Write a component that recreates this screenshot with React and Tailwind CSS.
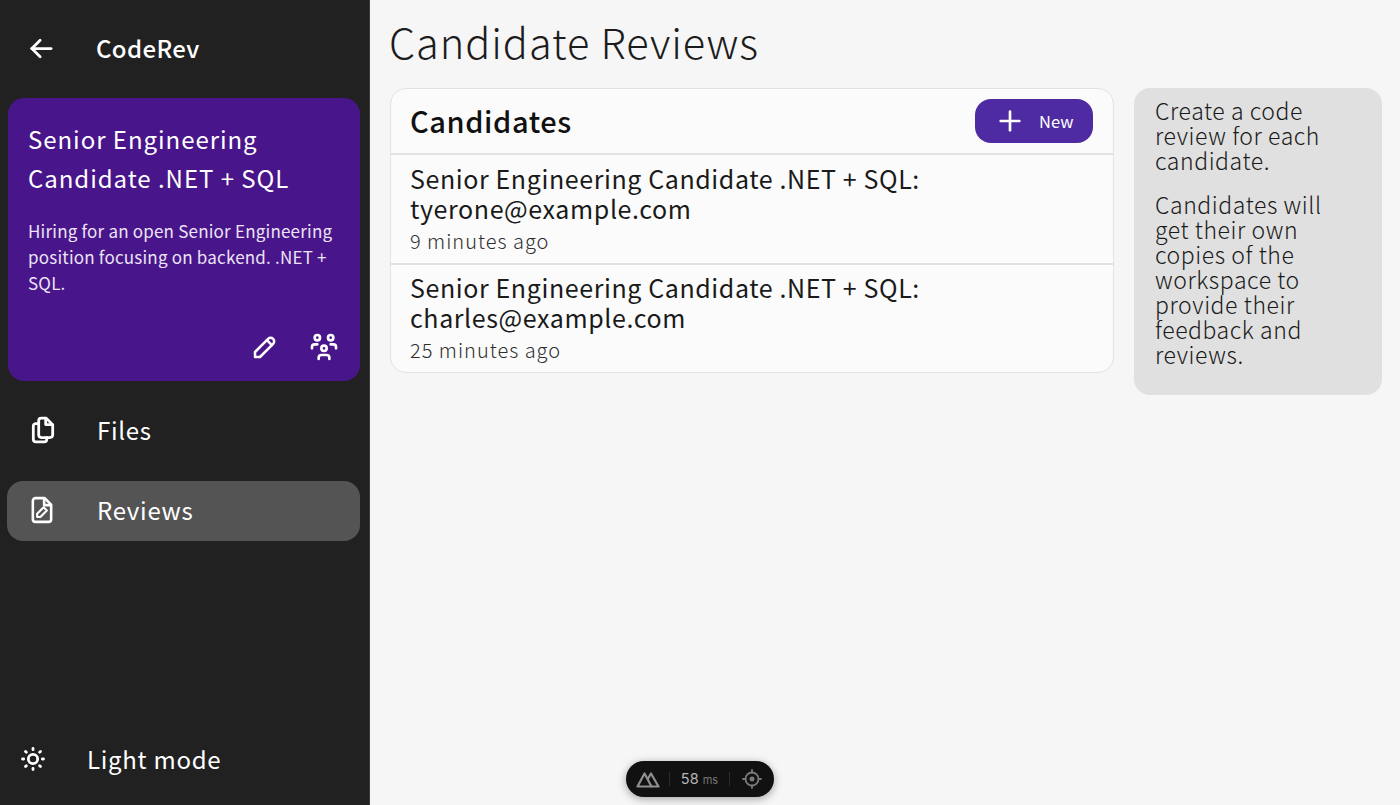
import { TbArrowLeft, TbPencil, TbUsersGroup, TbSun, TbPlus } from 'react-icons/tb';

const FilesIcon = () => (
  <svg width="28" height="28" viewBox="0 0 26 26" fill="none" stroke="currentColor" strokeWidth="2.6" strokeLinejoin="round" strokeLinecap="round">
    <path d="M9 4.500a2.500 2.500 0 0 1 2.500-2.500h4.500l6 6v9.500a2.500 2.500 0 0 1-2.500 2.500h-8a2.500 2.500 0 0 1-2.500-2.500z" />
    <path d="M15.500 2.500v5.500h6" />
    <path d="M9 7H6.500A2.500 2.500 0 0 0 4 9.500v12A2.500 2.500 0 0 0 6.500 24h7.500a2.500 2.500 0 0 0 2.500-2.500V20" />
  </svg>
);

const ReviewIcon = () => (
  <svg width="28" height="28" viewBox="0 0 26 26" fill="none" stroke="currentColor" strokeWidth="2.400" strokeLinejoin="round" strokeLinecap="round" className="-ml-[1px]">
    <path d="M4.500 4.500A2.500 2.500 0 0 1 7 2h8.500l6 6v13.500a2.500 2.500 0 0 1-2.500 2.500H7a2.500 2.500 0 0 1-2.500-2.500z" />
    <path d="M15 2.500V8.500h6" />
    <path d="M8.500 19.500v-3l6-6 3 3-6 6z" strokeWidth="2" />
  </svg>
);

const NuxtLogo = () => (
  <svg width="24" height="17" viewBox="0 0 24 17" fill="none" stroke="#8f8f8f" strokeWidth="2.200" strokeLinejoin="round">
    <path d="M1.500 15.500 8.500 2.500l7 13z" />
    <path d="M11.500 8.500 15 2.500l7.500 13h-7" />
  </svg>
);

const TargetIcon = () => (
  <svg width="20" height="20" viewBox="0 0 20 20" fill="none" stroke="#7a7a7a" strokeWidth="1.800" strokeLinecap="round">
    <circle cx="10" cy="10" r="6.500" />
    <circle cx="10" cy="10" r="1.600" fill="#7a7a7a" />
    <path d="M10 1v2.500M10 16.500V19M1 10h2.500M16.500 10H19" />
  </svg>
);

const candidates = [
  { email: 'tyerone@example.com', time: '9 minutes ago' },
  { email: 'charles@example.com', time: '25 minutes ago' },
];

const NavItem = ({ icon, label, active }) => (
  <div className={`h-[60px] mx-[7px] w-[353px] rounded-[16px] flex items-center text-white pb-[2px] ${active ? 'bg-[#545454]' : ''}`}>
    <span className="w-[90px] pl-[22px] flex items-center">{icon}</span>
    <span className="text-[24px] tracking-[0.03em] font-normal">{label}</span>
  </div>
);

export default function App() {
  return (
    <div className="h-[805px] w-[1400px] flex overflow-hidden bg-[#f6f6f6] font-['Noto_Sans_CJK_JP','Noto_Sans',sans-serif]">
      <aside className="w-[370px] shrink-0 h-full bg-[#212121] border-r border-[#3a3a3a] flex flex-col text-white">
        <div className="h-[98px] flex items-center pl-[25px] pb-[2px]">
          <TbArrowLeft size={33} className="mr-[38px]" />
          <span className="text-[24px] font-medium tracking-[0.015em]">CodeRev</span>
        </div>
        <section className="mx-2 w-[352px] h-[283px] rounded-[16px] bg-[#49158a] px-5 pt-[21px] flex flex-col">
          <h2 className="text-[24px] leading-[39px] font-normal tracking-[0.04em]">Senior Engineering Candidate .NET + SQL</h2>
          <p className="mt-[21px] text-[17px] leading-[26px] text-[#ece4f6] tracking-[0.012em]">Hiring for an open Senior Engineering position focusing on backend. .NET + SQL.</p>
          <div className="mt-auto mb-[18px] flex justify-end items-center gap-[28px]">
            <TbPencil size={30} />
            <TbUsersGroup size={32} />
          </div>
        </section>
        <nav className="mt-5 flex flex-col gap-5">
          <NavItem icon={<FilesIcon />} label="Files" />
          <NavItem icon={<ReviewIcon />} label="Reviews" active />
        </nav>
        <div className="mt-auto mb-[25px] h-[42px] flex items-center pl-[19px]">
          <TbSun size={28} strokeWidth={2.4} className="mr-[40px]" />
          <span className="text-[24px] tracking-[0.03em]">Light mode</span>
        </div>
      </aside>
      <main className="flex-1 px-5 relative">
        <h1 className="h-[88px] pt-[9px] -ml-[1px] text-[41.500px] leading-[64px] font-light text-[#1c1c1c] tracking-[0.023em]">Candidate Reviews</h1>
        <div className="flex items-start gap-5">
          <section className="w-[724px] rounded-[16px] border border-[#e2e2e2] bg-[#fbfbfb] overflow-hidden">
            <header className="h-[66px] flex items-center justify-between pl-[19px] pr-5 border-b-2 border-[#e2e2e2]">
              <h2 className="text-[29px] font-medium text-[#111] tracking-[0.02em]">Candidates</h2>
              <button className="w-[118px] h-[44px] rounded-[16px] bg-[#4e2ba3] text-white flex items-center pl-[19px]">
                <TbPlus size={32} className="mr-[13px]" />
                <span className="text-[16.500px]">New</span>
              </button>
            </header>
            {candidates.map((c, i) => (
              <div key={c.email} className={`pl-[19px] ${i > 0 ? 'h-[109px] pt-[7px] border-t-2 border-[#e2e2e2]' : 'h-[108px] pt-[8px]'}`}>
                <p className="text-[25px] leading-[30px] text-[#1a1a1a] tracking-[0.024em]">Senior Engineering Candidate .NET + SQL:<br />{c.email}</p>
                <p className="mt-[4px] text-[20px] leading-[28px] text-[#2e2e2e] tracking-[0.05em] font-light">{c.time}</p>
              </div>
            ))}
          </section>
          <aside className="w-[248px] h-[307px] rounded-[16px] bg-[#e0e0e0] pl-[21px] pr-[40px] pt-[10px] text-[23px] leading-[25px] text-[#1a1a1a] tracking-[0.025em] font-light">
            <p>Create a code review for each candidate.</p>
            <p className="mt-[19px]">Candidates will get their own copies of the workspace to provide their feedback and reviews.</p>
          </aside>
        </div>
        <div className="absolute left-[256px] top-[761px] w-[148px] h-[36px] rounded-full bg-[#111] shadow-[0_2px_8px_rgba(0,0,0,0.35)] flex items-center text-[#b5b5b5] font-['Inter',sans-serif]">
          <span className="w-[43px] pl-[10px] flex items-center"><NuxtLogo /></span>
          <span className="w-px h-[14px] bg-[#2c2c2c]" />
          <span className="w-[59px] text-center text-[14.500px]">58 <span className="text-[11px] text-[#777]">ms</span></span>
          <span className="w-px h-[14px] bg-[#2c2c2c]" />
          <span className="flex-1 flex justify-center"><TargetIcon /></span>
        </div>
      </main>
    </div>
  );
}
